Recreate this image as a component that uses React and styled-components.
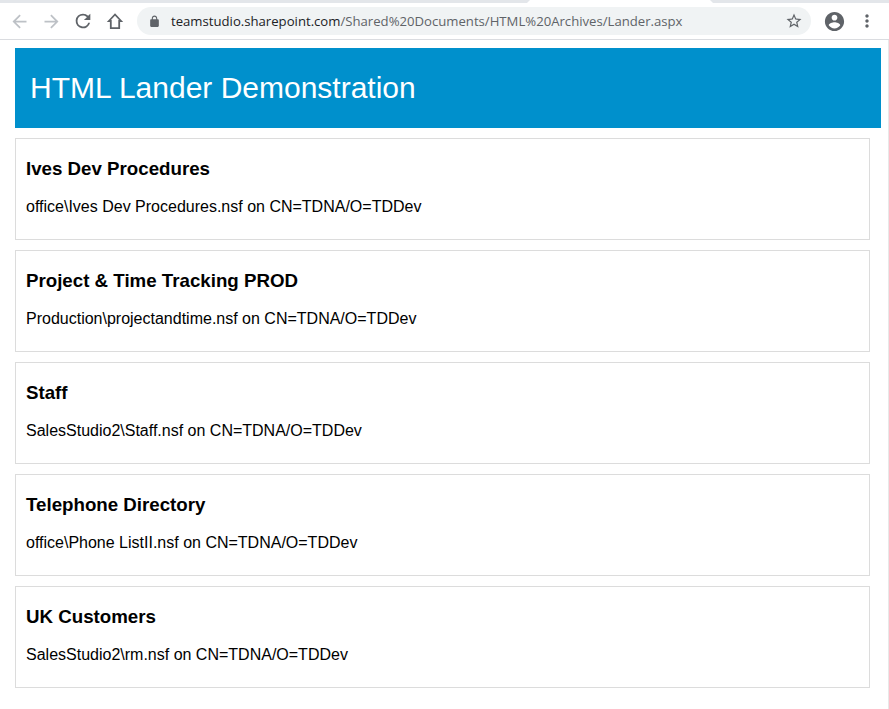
import React from 'react'
import styled, { createGlobalStyle } from 'styled-components'

const GlobalStyle = createGlobalStyle`
  html, body {
    margin: 0;
    padding: 0;
    background: #fff;
    font-family: "Liberation Sans", Arial, sans-serif;
    color: #000;
  }
`

const Window = styled.div`
  width: 889px;
  height: 709px;
  overflow: hidden;
  background: #fff;
  display: flex;
  flex-direction: column;
`

const TabStrip = styled.div`
  height: 3px;
  background: #e3e6ea;
  display: flex;
  justify-content: flex-end;
`

const ActiveTabEdge = styled.div`
  width: 186px;
  margin-right: 176px;
  background: #fff;
  clip-path: polygon(3px 0, 183px 0, 100% 100%, 0 100%);
`

const Toolbar = styled.div`
  height: 36px;
  display: flex;
  align-items: center;
  padding: 0 12px 0 9px;
  border-bottom: 1px solid #dadce0;
`

const NavButton = styled.button`
  width: 20px;
  height: 20px;
  margin-right: ${p => p.$gap}px;
  padding: 0;
  border: 0;
  background: none;
  display: flex;
  align-items: center;
  justify-content: center;
  color: ${p => (p.$disabled ? '#bdc1c6' : '#5f6368')};
`

const Omnibox = styled.div`
  width: 674px;
  height: 28px;
  margin-left: 12px;
  padding: 0 8px 0 11px;
  box-sizing: border-box;
  border-radius: 14px;
  background: #f0f3f4;
  display: flex;
  align-items: center;
  color: #5f6368;
  font-family: "Open Sans", "Noto Sans", sans-serif;
  font-size: 13.15px;
`

const Url = styled.div`
  flex: 1;
  margin-left: 10px;
  white-space: nowrap;
  color: #5f6368;
`

const Host = styled.span`
  color: #202124;
`

const ToolbarRight = styled.div`
  margin-left: 12px;
  display: flex;
  align-items: center;
  gap: 11px;
  color: #5f6368;
`

const Content = styled.div`
  flex: 1;
  width: 889px;
  box-sizing: border-box;
  padding: 8px 0 0 15px;
  border-right: 1px solid #e8e8e8;
`

const Banner = styled.header`
  width: 866px;
  height: 80px;
  box-sizing: border-box;
  background: #0090cc;
  display: flex;
  align-items: center;
  padding-left: 15px;
`

const BannerTitle = styled.h1`
  margin: 0;
  font-size: 30px;
  font-weight: 400;
  color: #fff;
`

const List = styled.div`
  width: 855px;
  margin-top: 10px;
  display: flex;
  flex-direction: column;
  gap: 10px;
`

const Card = styled.section`
  height: 102px;
  box-sizing: border-box;
  border: 1px solid #dcdcdc;
  padding: 19px 10px 0;
`

const CardTitle = styled.h2`
  margin: 0;
  font-size: 18.72px;
  line-height: 22px;
  font-weight: 700;
`

const CardText = styled.p`
  margin: 17px 0 0;
  font-size: 16px;
  line-height: 20px;
`

const items = [
  ['Ives Dev Procedures', 'office\\Ives Dev Procedures.nsf on CN=TDNA/O=TDDev'],
  ['Project & Time Tracking PROD', 'Production\\projectandtime.nsf on CN=TDNA/O=TDDev'],
  ['Staff', 'SalesStudio2\\Staff.nsf on CN=TDNA/O=TDDev'],
  ['Telephone Directory', 'office\\Phone ListII.nsf on CN=TDNA/O=TDDev'],
  ['UK Customers', 'SalesStudio2\\rm.nsf on CN=TDNA/O=TDDev'],
]

const Icon = ({ d, size = 20 }) => (
  <svg width={size} height={size} viewBox="0 0 24 24" fill="currentColor" style={{ flexShrink: 0 }}><path d={d} /></svg>
)

const HomeIcon = () => (
  <svg width="20" height="20" viewBox="0 0 20 20" fill="none" stroke="currentColor" strokeWidth="1.8">
    <path d="M10 3.5L3.9 10H5.8V17.2H14.2V10H16.1Z" />
  </svg>
)

export default function App() {
  return (
    <Window>
      <GlobalStyle />
      <TabStrip><ActiveTabEdge /></TabStrip>
      <Toolbar>
        <NavButton $disabled $gap={12}><Icon size={21} d="M20 11H7.83l5.59-5.59L12 4l-8 8 8 8 1.41-1.41L7.83 13H20v-2z" /></NavButton>
        <NavButton $disabled $gap={12}><Icon size={21} d="M12 4l-1.41 1.41L16.17 11H4v2h12.17l-5.58 5.59L12 20l8-8z" /></NavButton>
        <NavButton $gap={12}><Icon size={22} d="M17.65 6.35A7.96 7.96 0 0 0 12 4a8 8 0 1 0 7.73 10h-2.08A6 6 0 1 1 12 6c1.66 0 3.14.69 4.22 1.78L13 11h7V4l-2.35 2.35z" /></NavButton>
        <NavButton $gap={0}><HomeIcon /></NavButton>
        <Omnibox>
          <Icon size={13} d="M18 8h-1V6c0-2.76-2.24-5-5-5S7 3.24 7 6v2H6c-1.1 0-2 .9-2 2v10c0 1.1.9 2 2 2h12c1.1 0 2-.9 2-2V10c0-1.1-.9-2-2-2zM9 6c0-1.66 1.34-3 3-3s3 1.34 3 3v2H9V6z" />
          <Url><Host>teamstudio.sharepoint.com</Host>/Shared%20Documents/HTML%20Archives/Lander.aspx</Url>
          <Icon size={18} d="M22 9.24l-7.19-.62L12 2 9.19 8.63 2 9.24l5.46 4.73L5.82 21 12 17.27 18.18 21l-1.63-7.03L22 9.24zM12 15.4l-3.76 2.27 1-4.28-3.32-2.88 4.38-.38L12 6.1l1.71 4.04 4.38.38-3.32 2.88 1 4.28L12 15.4z" />
        </Omnibox>
        <ToolbarRight>
          <Icon size={23} d="M12 2C6.48 2 2 6.48 2 12s4.48 10 10 10 10-4.48 10-10S17.52 2 12 2zm0 3c1.66 0 3 1.34 3 3s-1.34 3-3 3-3-1.34-3-3 1.34-3 3-3zm0 14.2a7.2 7.2 0 0 1-6-3.22c.03-1.99 4-3.08 6-3.08s5.97 1.09 6 3.08a7.2 7.2 0 0 1-6 3.22z" />
          <Icon size={20} d="M12 8c1.1 0 2-.9 2-2s-.9-2-2-2-2 .9-2 2 .9 2 2 2zm0 2c-1.1 0-2 .9-2 2s.9 2 2 2 2-.9 2-2-.9-2-2-2zm0 6c-1.1 0-2 .9-2 2s.9 2 2 2 2-.9 2-2-.9-2-2-2z" />
        </ToolbarRight>
      </Toolbar>
      <Content>
        <Banner><BannerTitle>HTML Lander Demonstration</BannerTitle></Banner>
        <List>
          {items.map(([title, text]) => (
            <Card key={title}>
              <CardTitle>{title}</CardTitle>
              <CardText>{text}</CardText>
            </Card>
          ))}
        </List>
      </Content>
    </Window>
  )
}
